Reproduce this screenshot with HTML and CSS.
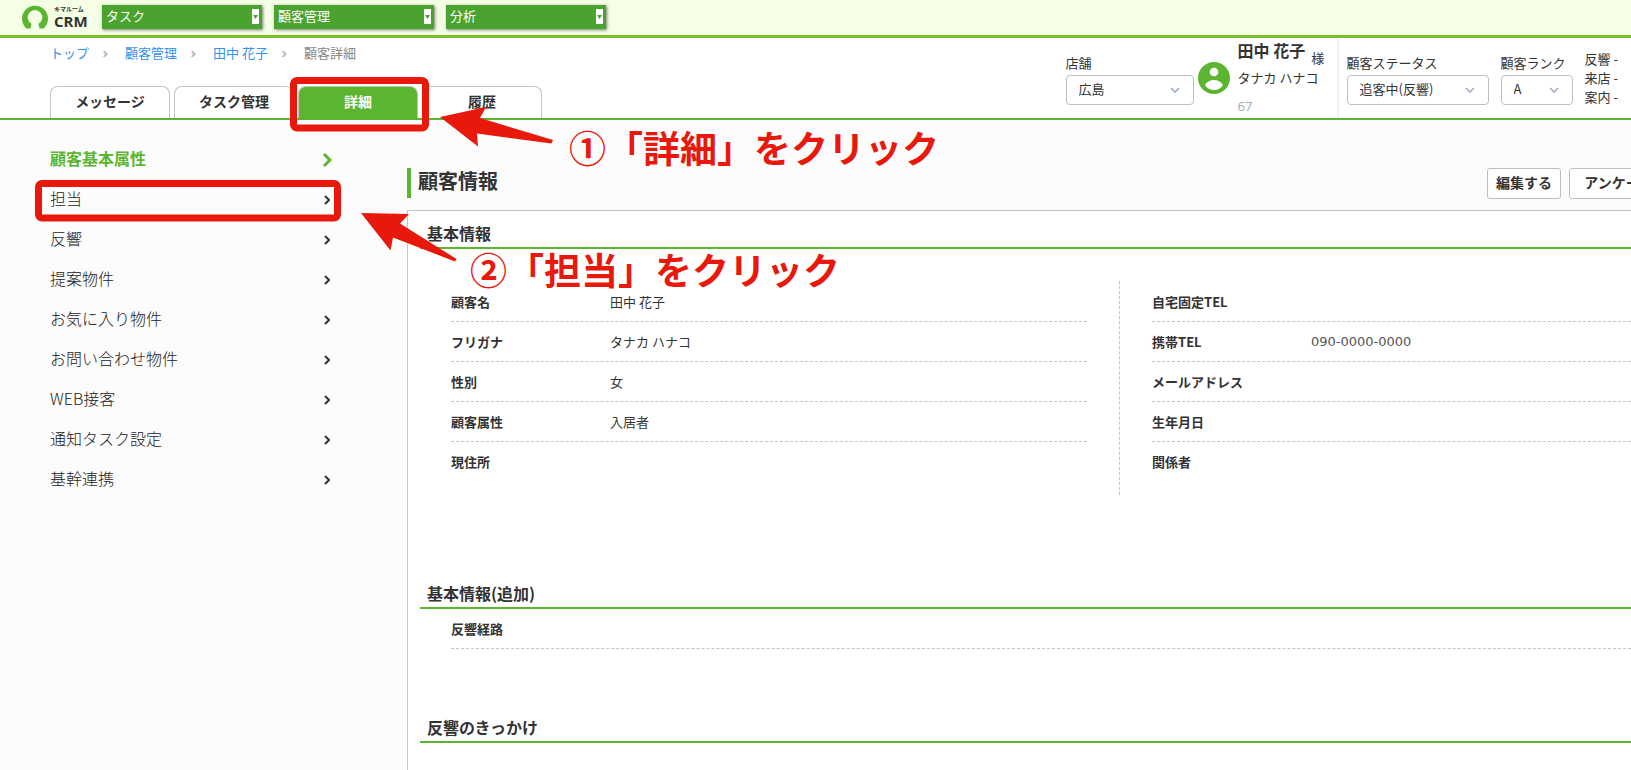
FILE: index.html
```html
<!DOCTYPE html>
<html lang="ja">
<head>
	<meta charset="UTF-8">
	<title>顧客詳細 | キマルームCRM</title>
	<link rel="stylesheet" href="styles.css">
</head>
<body>
	<div class="topbar">
		<a href="#" class="logo">
			<svg width="26" height="26" viewBox="0 0 26 26">
				<path d="M4.500 24.500A13 13 0 1 1 21.500 24.500L17.500 24.500L16.500 19.800A7.300 7.300 0 1 0 9.500 19.800L8.500 24.500Z" fill="#5cb531"/>
			</svg>
			<span class="logo-text"><small>キマルーム</small>CRM</span>
		</a>
		<select class="menu" aria-label="タスク"><option>タスク</option></select>
		<select class="menu" aria-label="顧客管理"><option>顧客管理</option></select>
		<select class="menu" aria-label="分析"><option>分析</option></select>
	</div>

	<header class="header">
		<div class="header-left">
			<nav class="breadcrumb">
				<a href="#">トップ</a>
				<svg class="sep" viewBox="0 0 5 6"><path d="M0 0L2 0L5 3L2 6L0 6L2 3Z"/></svg>
				<a href="#">顧客管理</a>
				<svg class="sep" viewBox="0 0 5 6"><path d="M0 0L2 0L5 3L2 6L0 6L2 3Z"/></svg>
				<a href="#">田中 花子</a>
				<svg class="sep" viewBox="0 0 5 6"><path d="M0 0L2 0L5 3L2 6L0 6L2 3Z"/></svg>
				<span>顧客詳細</span>
			</nav>
			<nav class="tabs">
				<a href="#">メッセージ</a>
				<a href="#">タスク管理</a>
				<a href="#" class="active">詳細</a>
				<a href="#">履歴</a>
			</nav>
		</div>

		<div class="customer">
			<div class="field">
				<label for="shop">店舗</label>
				<select id="shop" class="shop"><option>広島</option></select>
			</div>
			<svg class="avatar" width="32" height="32" viewBox="0 0 32 32">
				<circle cx="16" cy="16" r="16" fill="#5cb531"/>
				<circle cx="16" cy="10" r="4.3" fill="#fff"/>
				<path d="M7 23C9 19.500 12.500 18 16 18s7 1.500 9 5c-2 3.300-5.500 5-9 5s-7-1.700-9-5Z" fill="#fff"/>
			</svg>
			<div class="person">
				<div class="name"><b>田中 花子</b><span>様</span></div>
				<div class="kana">タナカ ハナコ</div>
				<div class="number">67</div>
			</div>
			<div class="status">
				<div class="field">
					<label for="status">顧客ステータス</label>
					<select id="status" class="state"><option>追客中(反響)</option></select>
				</div>
				<div class="field">
					<label for="rank">顧客ランク</label>
					<select id="rank" class="rank"><option>A</option></select>
				</div>
				<ul class="dates">
					<li>反響 -</li>
					<li>来店 -</li>
					<li>案内 -</li>
				</ul>
			</div>
		</div>
	</header>

	<div class="content">
		<nav class="sidebar">
			<a href="#" class="current">顧客基本属性<svg width="10" height="16" viewBox="0 0 10 16"><path d="M2 2L8 8L2 14"/></svg></a>
			<a href="#">担当<svg width="6" height="10" viewBox="0 0 6 10"><path d="M1 1L5 5L1 9"/></svg></a>
			<a href="#">反響<svg width="6" height="10" viewBox="0 0 6 10"><path d="M1 1L5 5L1 9"/></svg></a>
			<a href="#">提案物件<svg width="6" height="10" viewBox="0 0 6 10"><path d="M1 1L5 5L1 9"/></svg></a>
			<a href="#">お気に入り物件<svg width="6" height="10" viewBox="0 0 6 10"><path d="M1 1L5 5L1 9"/></svg></a>
			<a href="#">お問い合わせ物件<svg width="6" height="10" viewBox="0 0 6 10"><path d="M1 1L5 5L1 9"/></svg></a>
			<a href="#">WEB接客<svg width="6" height="10" viewBox="0 0 6 10"><path d="M1 1L5 5L1 9"/></svg></a>
			<a href="#">通知タスク設定<svg width="6" height="10" viewBox="0 0 6 10"><path d="M1 1L5 5L1 9"/></svg></a>
			<a href="#">基幹連携<svg width="6" height="10" viewBox="0 0 6 10"><path d="M1 1L5 5L1 9"/></svg></a>
		</nav>

		<main class="main">
			<div class="title-row">
				<h1>顧客情報</h1>
				<div class="actions">
					<button type="button">編集する</button>
					<button type="button" class="wide">アンケート</button>
				</div>
			</div>

			<div class="panel">
				<h2>基本情報</h2>
				<div class="info">
					<dl>
						<div><dt>顧客名</dt><dd>田中 花子</dd></div>
						<div><dt>フリガナ</dt><dd>タナカ ハナコ</dd></div>
						<div><dt>性別</dt><dd>女</dd></div>
						<div><dt>顧客属性</dt><dd>入居者</dd></div>
						<div><dt>現住所</dt><dd></dd></div>
					</dl>
					<dl class="right">
						<div><dt>自宅固定TEL</dt><dd></dd></div>
						<div><dt>携帯TEL</dt><dd class="tel">090-0000-0000</dd></div>
						<div><dt>メールアドレス</dt><dd></dd></div>
						<div><dt>生年月日</dt><dd></dd></div>
						<div><dt>関係者</dt><dd></dd></div>
					</dl>
				</div>

				<h2>基本情報(追加)</h2>
				<dl class="extra">
					<div><dt>反響経路</dt><dd></dd></div>
				</dl>

				<h2>反響のきっかけ</h2>
			</div>
		</main>
	</div>

	<!-- guide marks over the page -->
	<svg class="marks" width="600" height="300" viewBox="0 0 600 300">
		<rect x="293.500" y="80.500" width="132" height="47.500" rx="3.500"/>
		<rect x="38.500" y="183.500" width="299" height="34.500" rx="3.500"/>
		<path d="M440 117L486 107L480 118L553 140L551.500 143.500L477 133.500L478 146.500Z"/>
		<path d="M361 213L409 214L400 223.500L456.500 259L455 261.500L393 237.500L390.500 250.500Z"/>
	</svg>
	<p class="note note-1">①「詳細」をクリック</p>
	<p class="note note-2">②「担当」をクリック</p>
</body>
</html>
```

FILE: styles.css
```css
* {
	box-sizing: border-box;
}

body {
	margin: 0;
	min-height: 100vh;
	position: relative;
	overflow: hidden;
	background-color: #fcfcfc;
	color: #333;
	font-family: "Noto Sans CJK JP", "Noto Sans", sans-serif;
	font-size: 13px;
	line-height: 20px;
}

a {
	color: inherit;
	text-decoration: none;
}

ul, dl, dd, h1, h2, p {
	margin: 0;
	padding: 0;
}

select, button {
	font-family: inherit;
	font-size: 13px;
	color: #333;
}

select {
	appearance: none;
}

/* top bar */
.topbar {
	display: flex;
	align-items: center;
	gap: 12px;
	height: 38px;
	padding: 0 22px 2px;
	background-color: #f5ffe6;
	border-bottom: 3px solid #7cbd2c;
}

.logo {
	display: flex;
	align-items: center;
	gap: 6px;
	width: 68px;
}

.logo-text {
	font-family: "Open Sans", sans-serif;
	font-size: 15px;
	font-weight: bold;
	line-height: 16px;
}

.logo-text small {
	display: block;
	font-family: "Noto Sans CJK JP", sans-serif;
	font-size: 6px;
	line-height: 8px;
	white-space: nowrap;
}

.menu {
	width: 160px;
	height: 24px;
	padding: 0 4px 2px;
	border: none;
	border-radius: 0;
	color: white;
	background: #4aa32e url("data:image/svg+xml,%3Csvg xmlns='http://www.w3.org/2000/svg' width='7' height='15'%3E%3Cpath fill='white' d='M0 0h7v15H0z'/%3E%3Cpath fill='%234aa32e' d='M1 6h5l-2.500 4z'/%3E%3C/svg%3E") no-repeat right 3px center;
	box-shadow: 1px 1px 3px rgba(0, 0, 0, 0.5);
}

/* header */
.header {
	display: flex;
	justify-content: space-between;
	background-color: white;
	border-bottom: 2px solid #5cb531;
}

.header-left {
	display: flex;
	flex-direction: column;
	justify-content: space-between;
	padding: 5px 0 0 50px;
}

.breadcrumb {
	display: flex;
	align-items: center;
	color: #888;
}

.breadcrumb a {
	color: #3292ec;
}

.sep {
	width: 5px;
	height: 6px;
	margin: 2px 17px 0 14px;
	fill: #bbb;
}

.tabs {
	display: flex;
	gap: 4px;
}

.tabs a {
	width: 120px;
	height: 32px;
	border: 1px solid #c4c4c4;
	border-bottom: none;
	border-radius: 8px 8px 0 0;
	background-color: white;
	font-size: 14px;
	font-weight: bold;
	line-height: 29px;
	text-align: center;
}

.tabs .active {
	background-color: #5cb531;
	color: white;
}

.customer {
	display: flex;
	height: 80px;
}

.field {
	padding-top: 15px;
}

.field label {
	display: block;
	padding-bottom: 2px;
}

.field select {
	height: 30px;
	padding: 0 12px 4px;
	border: 1px solid #bfbfbf;
	border-radius: 4px;
	background: white url("data:image/svg+xml,%3Csvg xmlns='http://www.w3.org/2000/svg' width='10' height='6'%3E%3Cpath fill='none' stroke='%2399a9bf' stroke-width='1.500' d='M1 1l4 4 4-4'/%3E%3C/svg%3E") no-repeat right 13px center;
}

.field .shop {
	width: 128px;
}

.field .state {
	width: 142px;
}

.field .rank {
	width: 72px;
}

.avatar {
	margin: 24px 8px 0 4px;
}

.person {
	width: 101px;
	border-right: 2px solid #ebf1f5;
}

.name {
	display: flex;
	gap: 6px;
	height: 30px;
	line-height: 24px;
}

.name b {
	font-size: 16px;
}

.name span {
	padding-top: 8px;
}

.number {
	padding-top: 8px;
	color: #9aabbd;
	font-family: "Open Sans", sans-serif;
}

.status {
	display: flex;
	gap: 12px;
	padding: 0 13px 0 8px;
}

.dates {
	padding-top: 11px;
	list-style: none;
	line-height: 19px;
	white-space: nowrap;
}

/* content */
.content {
	display: flex;
}

.sidebar {
	flex: none;
	width: 407px;
	padding: 19px 73px 0 50px;
}

.sidebar a {
	display: flex;
	align-items: center;
	justify-content: space-between;
	height: 40px;
	padding: 0 4px 2px 0;
	color: #222;
	font-size: 16px;
	font-weight: 300;
}

.sidebar svg {
	margin-top: 4px;
	fill: none;
	stroke: #333;
	stroke-width: 2;
}

.sidebar .current {
	padding-right: 2px;
	color: #5cb531;
	font-weight: bold;
}

.sidebar .current svg {
	stroke: #5cb531;
	stroke-width: 3;
}

.main {
	flex: 1;
	min-width: 0;
	padding-top: 48px;
}

.title-row {
	display: flex;
	justify-content: space-between;
	height: 42px;
}

h1 {
	height: 30px;
	padding-left: 7px;
	border-left: 4px solid #5cb531;
	font-size: 20px;
	line-height: 26px;
}

.actions {
	display: flex;
	gap: 8px;
	width: 144px;
	overflow: hidden;
}

.actions button {
	flex: none;
	width: 74px;
	height: 31px;
	padding: 0 0 3px;
	border: 1px solid #bfbfbf;
	border-radius: 3px;
	background-color: white;
	font-size: 14px;
	font-weight: bold;
}

.actions .wide {
	width: 100px;
}

.panel {
	min-height: 560px;
	padding-left: 12px;
	border-top: 1px solid #c4c4c4;
	border-left: 1px solid #c4c4c4;
	background-color: white;
}

h2 {
	padding: 8px 7px 0;
	border-bottom: 2px solid #5cb531;
	font-size: 16px;
	line-height: 28px;
}

.info {
	display: grid;
	grid-template-columns: 668fr 512fr;
	margin: 32px 0 76px;
	padding-left: 31px;
}

.info dl {
	height: 214px;
	padding: 1px 32px 0 0;
}

.info .right {
	padding: 1px 0 0 32px;
	border-left: 1px dashed #c4c4c4;
}

dl > div {
	display: flex;
	height: 40px;
	border-bottom: 1px dashed #c4c4c4;
	line-height: 39px;
}

.info dl > div:last-child {
	border-bottom: none;
}

dt {
	width: 159px;
	font-weight: bold;
}

.tel {
	color: #555;
	font-family: "DejaVu Sans", sans-serif;
}

.extra {
	margin-bottom: 56px;
	padding-left: 31px;
}

/* guide marks */
.marks {
	position: absolute;
	top: 0;
	left: 0;
	pointer-events: none;
}

.marks rect {
	fill: none;
	stroke: #e8190c;
	stroke-width: 7;
}

.marks path {
	fill: #e8190c;
}

.note {
	position: absolute;
	color: #e8190c;
	font-size: 37px;
	font-weight: bold;
	line-height: 40px;
	white-space: nowrap;
	text-shadow: 0 0 3px white, 0 0 3px white;
}

.note-1 {
	top: 127px;
	left: 569px;
}

.note-2 {
	top: 249px;
	left: 470px;
}
```
